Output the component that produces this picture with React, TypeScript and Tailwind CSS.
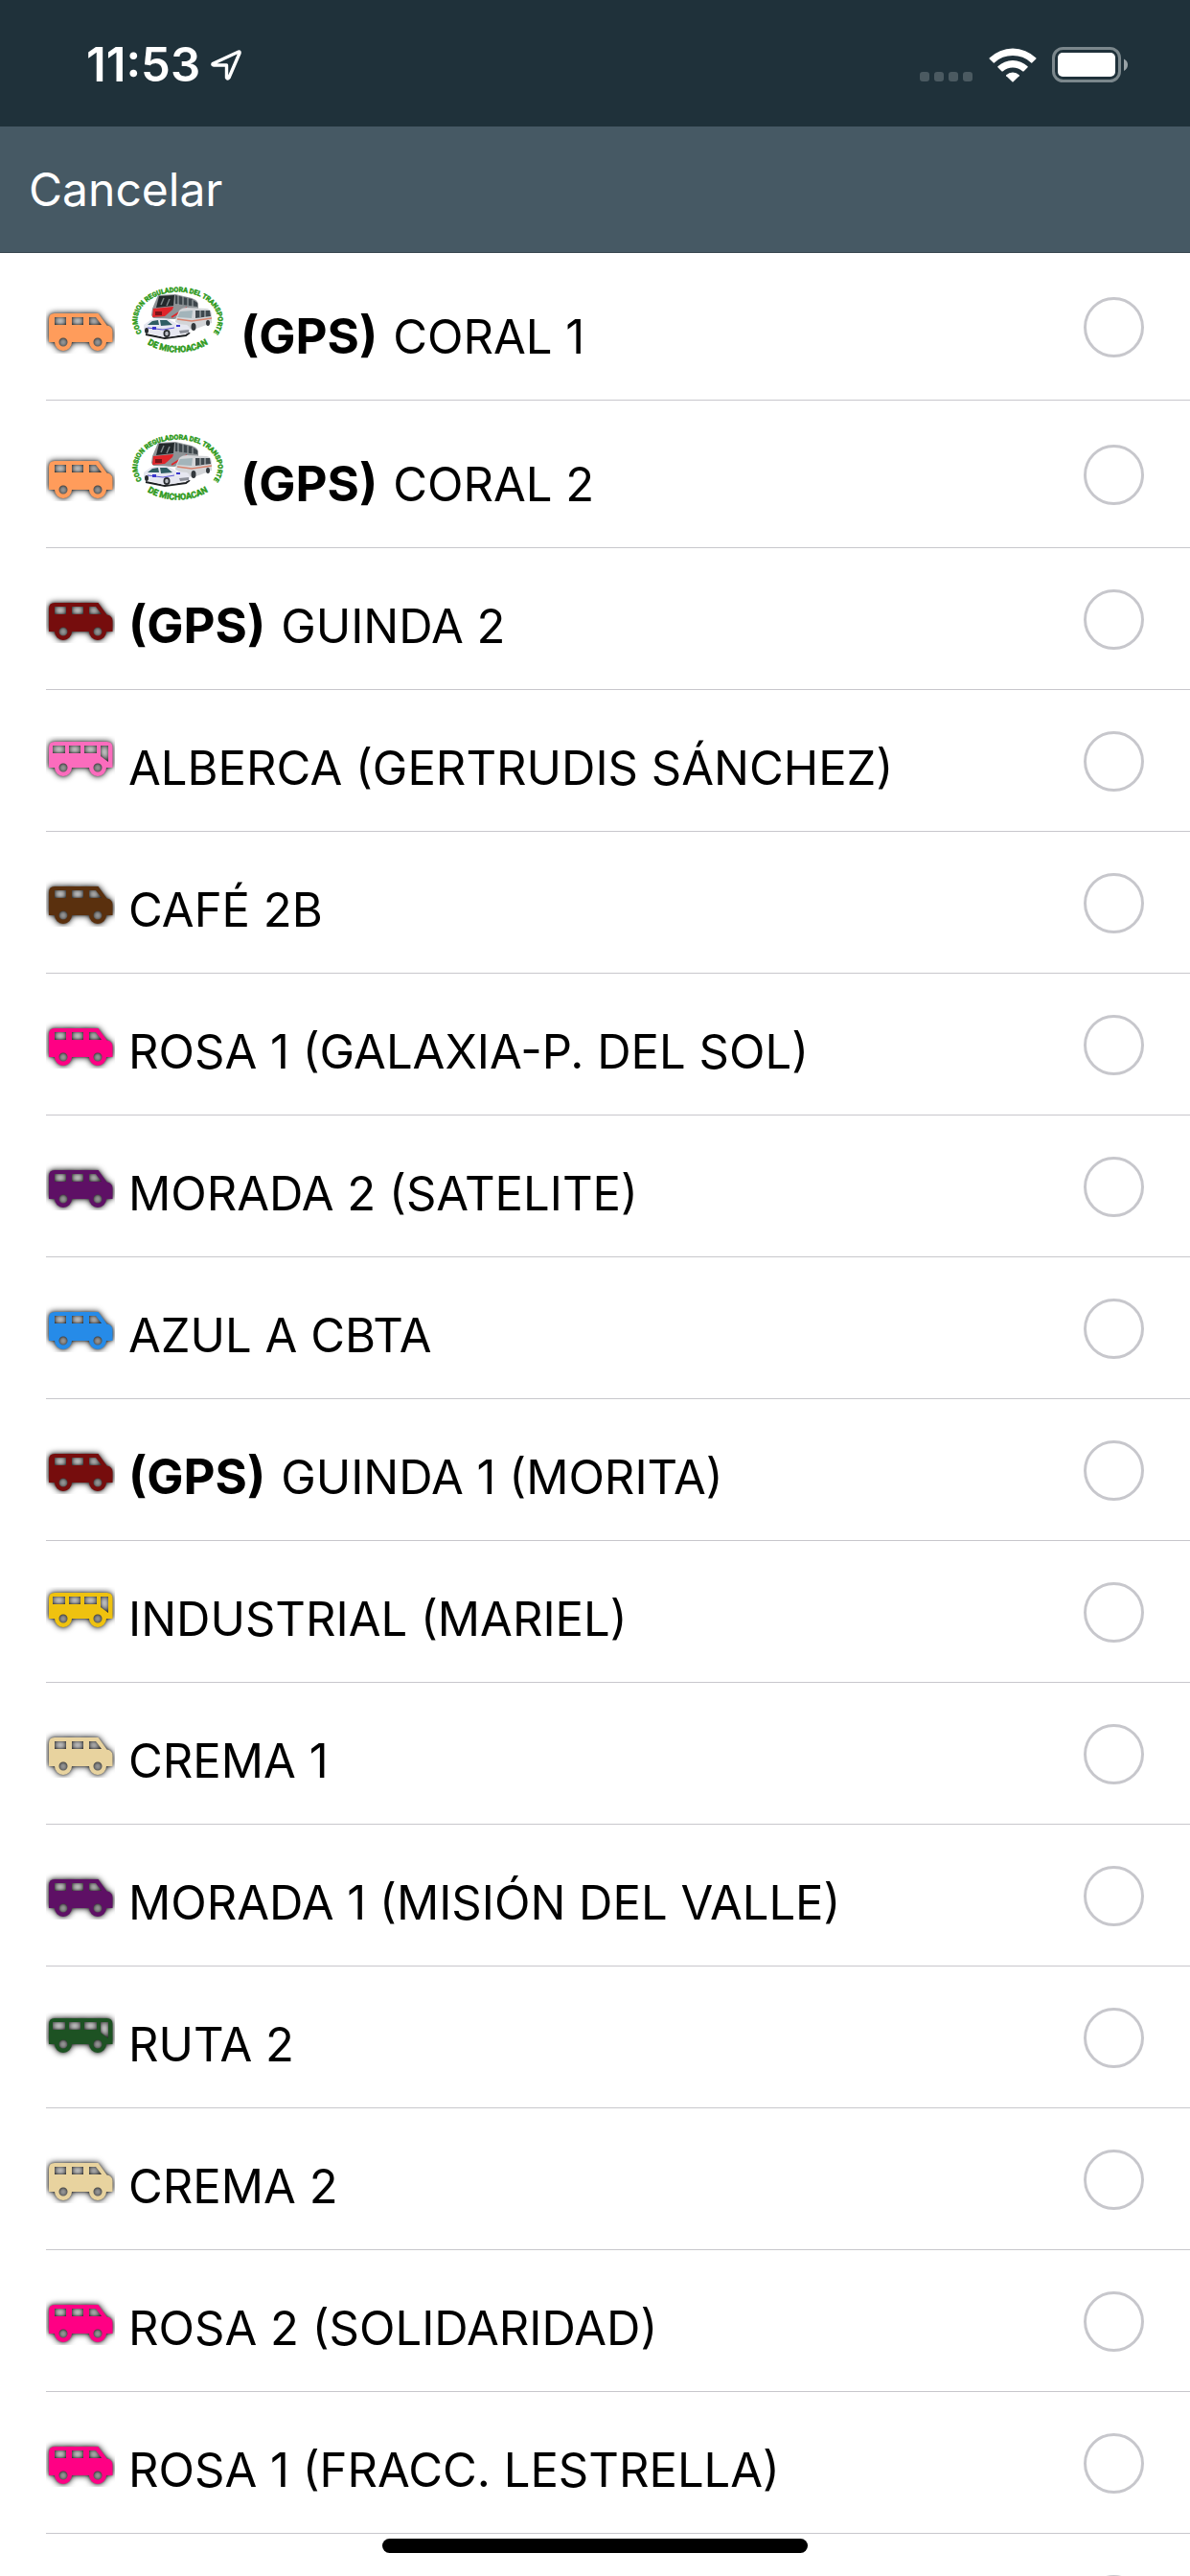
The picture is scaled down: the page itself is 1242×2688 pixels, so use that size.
type Shape = "van" | "bus";

type Route = {
  id: string;
  name: string;
  color: string;
  shape: Shape;
  gps?: boolean;
  logo?: boolean;
};

/* ================= DATA ================= */

const ROUTES: Route[] = [
  { id: "coral-1", name: "CORAL 1", color: "#ff9c5b", shape: "van", gps: true, logo: true },
  { id: "coral-2", name: "CORAL 2", color: "#ff9c5b", shape: "van", gps: true, logo: true },
  { id: "guinda-2", name: "GUINDA 2", color: "#760d0d", shape: "van", gps: true },
  { id: "alberca", name: "ALBERCA (GERTRUDIS SÁNCHEZ)", color: "#fb6cbd", shape: "bus" },
  { id: "cafe-2b", name: "CAFÉ 2B", color: "#5a300e", shape: "van" },
  { id: "rosa-1-galaxia", name: "ROSA 1 (GALAXIA-P. DEL SOL)", color: "#ff0084", shape: "van" },
  { id: "morada-2", name: "MORADA 2 (SATELITE)", color: "#5e1065", shape: "van" },
  { id: "azul-a", name: "AZUL A CBTA", color: "#268be8", shape: "van" },
  { id: "guinda-1", name: "GUINDA 1 (MORITA)", color: "#760d0d", shape: "van", gps: true },
  { id: "industrial", name: "INDUSTRIAL (MARIEL)", color: "#efc20f", shape: "bus" },
  { id: "crema-1", name: "CREMA 1", color: "#e8d39f", shape: "van" },
  { id: "morada-1", name: "MORADA 1 (MISIÓN DEL VALLE)", color: "#5e1065", shape: "van" },
  { id: "ruta-2", name: "RUTA 2", color: "#1d5223", shape: "bus" },
  { id: "crema-2", name: "CREMA 2", color: "#e8d39f", shape: "van" },
  { id: "rosa-2", name: "ROSA 2 (SOLIDARIDAD)", color: "#ff0084", shape: "van" },
  { id: "rosa-1-fracc", name: "ROSA 1 (FRACC. LESTRELLA)", color: "#ff0084", shape: "van" },
  { id: "next", name: "", color: "#ff0084", shape: "van" },
];

/* ================= ICONS ================= */

const VAN_PATH =
  "M9 9H54.5L63.5 21.5Q69.5 22.5 69.5 28V39H63A9 9 0 0 1 45 39H27A9 9 0 0 1 9 39H3V15Q3 9 9 9Z" +
  "M9 13V21H21V13ZM27 13V21H39V13ZM45 13V21H58L52 13Z" +
  "M13.5 39a4.5 4.5 0 1 0 9 0a4.5 4.5 0 1 0 -9 0Z" +
  "M49.5 39a4.5 4.5 0 1 0 9 0a4.5 4.5 0 1 0 -9 0Z";

const BUS_PATH =
  "M9 6H63.5Q69.5 6 69.5 12V33H63A9 9 0 0 1 45 33H27A9 9 0 0 1 9 33H3V12Q3 6 9 6Z" +
  "M7 10V18H20V10ZM24 10V18H36V10ZM40 10V18H53V10ZM57 10V21L65 27V10Z" +
  "M13.5 33a4.5 4.5 0 1 0 9 0a4.5 4.5 0 1 0 -9 0Z" +
  "M49.5 33a4.5 4.5 0 1 0 9 0a4.5 4.5 0 1 0 -9 0Z";

function VehicleIcon({ shape, color }: { shape: Shape; color: string }) {
  return (
    <svg viewBox="0 0 72 51" className="w-[72px] h-[51px] shrink-0 overflow-hidden" aria-hidden="true">
      <g className="[filter:drop-shadow(0_0_1px_#0006)_drop-shadow(0_0_3px_#000)]">
        <path d={shape === "van" ? VAN_PATH : BUS_PATH} fill={color} fillRule="evenodd" />
      </g>
    </svg>
  );
}

function RegulatorLogo({ id }: { id: string }) {
  return (
    <svg viewBox="0 0 103 71" className="w-[103px] h-[71px] shrink-0" aria-hidden="true">
      <defs>
        <path id={`${id}-top`} d="M19 54A42 29 0 1 1 84 54" />
        <path id={`${id}-bottom`} d="M8 49A47 33 0 0 0 95 49" />
      </defs>
      <g
        fill="#2f9a1c"
        stroke="#2f9a1c"
        strokeWidth="0.5"
        className="font-['Roboto',sans-serif] font-bold text-[7px]"
        textAnchor="middle"
      >
        <text>
          <textPath href={`#${id}-top`} startOffset="50%">COMISION REGULADORA DEL TRANSPORTE</textPath>
        </text>
        <text className="text-[9px]">
          <textPath href={`#${id}-bottom`} startOffset="50%">DE MICHOACAN</textPath>
        </text>
      </g>

      {/* coach */}
      <path d="M31 10L49 9L66 13Q72 15 73 19V28L48 35L26 34L24 31L25 24Z" fill="#8e9396" />
      <path d="M49 10L66 14L72 18V22L49 19Z" fill="#3d464b" />
      <path d="M52 10V20M57 11V20M62 13V21M67 15V22" stroke="#aeb4b7" strokeWidth="1" />
      <path d="M32 11L48 10L47 21L29 23Z" fill="#22282b" />
      <path d="M34 20L37 13M40 21L43 14" stroke="#7d8689" strokeWidth="1.5" />
      <path d="M26 24L47 22L46 25L38 32L25 33Z" fill="#e0252a" />
      <path d="M28 27H35V31H28Z" fill="#7a1418" />
      <path d="M45 33L61 23" stroke="#e0252a" strokeWidth="1.5" />

      {/* minibus */}
      <path d="M53 26Q56 23 61 23L82 24Q87 25 87 31V39L68 46L62 45L49 38L50 33Z" fill="#d3d5d8" />
      <path d="M54 27L67 26L66 34L51 33Z" fill="#a3b4ba" />
      <path d="M70 26L85 26L86 32L70 34Z" fill="#3f484e" />
      <path d="M75 26V33M80 26V33" stroke="#c5c9cc" strokeWidth="1" />
      <path d="M51 35L66 37L87 34" stroke="#d7836e" strokeWidth="1.5" fill="none" />
      <ellipse cx="68" cy="43" rx="2.5" ry="4" fill="#33383c" />
      <ellipse cx="83" cy="39" rx="2" ry="3" fill="#33383c" />

      {/* taxi */}
      <path d="M18 51L38 55L60 52L64 49" stroke="#1c1f22" strokeWidth="2" fill="none" />
      <path d="M16 41L23 36Q32 33 42 35L51 40L61 41Q65 43 64 49L47 53L37 54L19 49L16 46Z" fill="#e6e7f0" />
      <path d="M20 41L25 37L31 36L32 41ZM33 36L40 36L46 41L34 42Z" fill="#2f5d63" />
      <path d="M20 44L36 46L48 44" stroke="#5a55d2" strokeWidth="1" fill="none" />
      <path d="M25 43H29V46H25ZM50 41H54V43H50Z" fill="#3a35cc" />
      <ellipse cx="40" cy="50" rx="3.5" ry="4" fill="#26292d" />
      <ellipse cx="40" cy="50" rx="1.8" ry="2.2" fill="#b9bcc2" />
      <ellipse cx="19" cy="47" rx="2" ry="3" fill="#26292d" />
      <path d="M53 47L63 46V49L54 50Z" fill="#8d9099" />
    </svg>
  );
}

function StatusBar() {
  return (
    <div className="h-[132px] shrink-0 bg-[#1f313a] text-white flex items-center justify-between pt-1 pl-[90px] pr-[64px]">
      <div className="flex items-center gap-[10px]">
        <span className="text-[49px] leading-[60px] font-semibold">11:53</span>
        <svg viewBox="0 0 34 34" className="w-[34px] h-[34px]" fill="none" aria-hidden="true">
          <path
            d="M30 3L3 15.5Q2.500 17 4 17H17.500V30Q18.500 32 20 30L31 4.500Q31.500 2.500 30 3Z"
            stroke="currentColor"
            strokeWidth="3.4"
            strokeLinejoin="round"
          />
        </svg>
      </div>

      <div className="flex items-center">
        <div className="flex gap-[5px] mt-6 mr-[17px]">
          <span className="size-[10px] rounded-[3px] bg-[#4b5a61]" />
          <span className="size-[10px] rounded-[3px] bg-[#4b5a61]" />
          <span className="size-[10px] rounded-[3px] bg-[#4b5a61]" />
          <span className="size-[10px] rounded-[3px] bg-[#4b5a61]" />
        </div>
        <svg viewBox="0 0 50 36" className="w-[50px] h-[36px] mr-4" fill="currentColor" aria-hidden="true">
          <path d="M0.600 10.500A35 35 0 0 1 49.400 10.500Q49.700 11 49.300 11.500L45.200 15.500Q44.700 15.900 44.200 15.500A28 28 0 0 0 5.800 15.500Q5.300 15.900 4.800 15.500L0.700 11.500Q0.300 11 0.600 10.500Z" />
          <path d="M9.400 19.300A22.500 22.500 0 0 1 40.600 19.300Q41 19.800 40.600 20.300L36.400 24.400Q35.900 24.800 35.400 24.400A15.500 15.500 0 0 0 14.600 24.400Q14.100 24.800 13.600 24.400L9.400 20.300Q9 19.800 9.400 19.300Z" />
          <path d="M18.200 28.200A10 10 0 0 1 31.800 28.200Q32.200 28.700 31.800 29.200L25.600 35.300Q25 35.800 24.400 35.300L18.200 29.200Q17.800 28.700 18.200 28.200Z" />
        </svg>
        <svg viewBox="0 0 80 38" className="w-[80px] h-[38px]" aria-hidden="true">
          <rect x="1.500" y="1.500" width="69" height="34" rx="10" fill="none" stroke="#7b878c" strokeWidth="3" />
          <rect x="6" y="6" width="60" height="25" rx="5" fill="#fff" />
          <path d="M75 12.500Q79 14.500 79 18.500T75 25Z" fill="#9aa3a7" />
        </svg>
      </div>
    </div>
  );
}

function RouteRow({ route }: { route: Route }) {
  return (
    <li className="ml-12 border-b border-[#c8c7cc]">
      <label htmlFor={route.id} className="flex items-center justify-between pr-12">
        <span className="flex items-baseline gap-[14px] pt-[34px] pb-[17px] leading-[96px] whitespace-nowrap">
          <VehicleIcon shape={route.shape} color={route.color} />
          {route.logo && <RegulatorLogo id={route.id} />}
          <span>
            {route.gps && <strong className="mr-4 font-bold text-[51px] leading-none">(GPS)</strong>}
            {route.name || "\u00a0"}
          </span>
        </span>
        <input
          id={route.id}
          type="radio"
          name="route"
          className="appearance-none size-[63px] mt-[2px] shrink-0 rounded-full border-[3px] border-[#c7c7cc] checked:bg-[#465964]"
        />
      </label>
    </li>
  );
}

/* ================= PAGE ================= */

export default function App() {
  return (
    <div className="h-screen flex flex-col overflow-hidden bg-white text-black text-[49px] font-['Inter','Liberation_Sans',sans-serif]">
      <StatusBar />

      {/* TOOLBAR */}
      <header className="h-[132px] shrink-0 flex items-center px-[30px] bg-[#465964] border-b border-[#37464f]">
        <button type="button" className="text-white text-[48px] leading-[60px]">
          Cancelar
        </button>
      </header>

      {/* ROUTES */}
      <ul className="flex-1 min-h-0 overflow-hidden">
        {ROUTES.map((route) => (
          <RouteRow key={route.id} route={route} />
        ))}
      </ul>

      {/* HOME INDICATOR */}
      <div className="fixed bottom-6 left-1/2 -translate-x-1/2 w-[444px] h-[15px] rounded-full bg-black" />
    </div>
  );
}
